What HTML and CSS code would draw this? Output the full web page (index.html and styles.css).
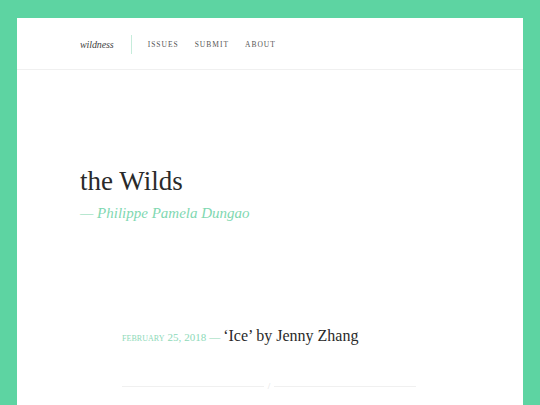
FILE: index.html
```html
<!DOCTYPE html>
<html>
<head>
<meta charset="utf-8">
<link rel="stylesheet" href="styles.css">
</head>
<body>
<div class="frame">
  <div class="panel">
    <header class="site-header">
      <span class="logo">wildness</span>
      <span class="divider"></span>
      <nav class="nav">
        <a class="nav-link">Issues</a>
        <a class="nav-link">Submit</a>
        <a class="nav-link">About</a>
      </nav>
    </header>
    <section class="hero">
      <h1 class="title">the Wilds</h1>
      <p class="author">— Philippe Pamela Dungao</p>
    </section>
    <section class="posts">
      <p class="post"><span class="date">February 25, 2018 —</span> <span class="post-title">‘Ice’ by Jenny Zhang</span></p>
      <div class="sep"><span class="sep-line"></span><span class="slash">/</span><span class="sep-line"></span></div>
    </section>
  </div>
</div>
</body>
</html>
```

FILE: styles.css
```css
html, body {
  margin: 0;
  padding: 0;
  height: 100%;
  overflow: hidden;
}
body {
  background: #5dd4a2;
  font-family: "Liberation Serif", "DejaVu Serif", serif;
  color: #2b2b2b;
}
.frame {
  padding: 18px 17px 0 17px;
  height: 100%;
  box-sizing: border-box;
}
.panel {
  background: #fff;
  height: 100%;
}
.site-header {
  display: flex;
  align-items: center;
  height: 52px;
  padding-top: 2px;
  border-bottom: 1px solid #f0f0f0;
  padding-left: 63px;
  box-sizing: border-box;
}
.logo {
  font-style: italic;
  font-size: 10px;
  letter-spacing: -0.1px;
  color: #444;
}
.divider {
  width: 1px;
  height: 19px;
  background: #c6ecdb;
  margin: 0 16px 0 17px;
}
.nav {
  display: flex;
  gap: 16px;
}
.nav-link {
  font-size: 7.5px;
  text-transform: uppercase;
  letter-spacing: 1px;
  color: #555;
}
.hero {
  padding: 95px 0 0 63px;
}
.title {
  margin: 0;
  font-weight: normal;
  font-size: 27px;
  line-height: 32px;
  color: #2a2a2a;
}
.author {
  margin: 8px 0 0 0;
  font-style: italic;
  font-size: 15px;
  color: #7fd8b1;
}
.posts {
  padding: 105px 0 0 105px;
  width: 294px;
}
.post {
  margin: 0;
  display: flex;
  align-items: baseline;
  gap: 3px;
}
.date {
  font-size: 11px;
  letter-spacing: 0.05px;
  text-transform: lowercase;
  font-variant: small-caps;
  color: #8ed9b8;
}
.post-title {
  font-size: 16px;
  color: #2a2a2a;
}
.sep {
  display: flex;
  align-items: center;
  gap: 4px;
  margin-top: 36px;
}
.sep-line {
  flex: 1;
  height: 1px;
  background: #f0f0f0;
}
.slash {
  font-size: 9px;
  color: #e0e0e0;
}
```
